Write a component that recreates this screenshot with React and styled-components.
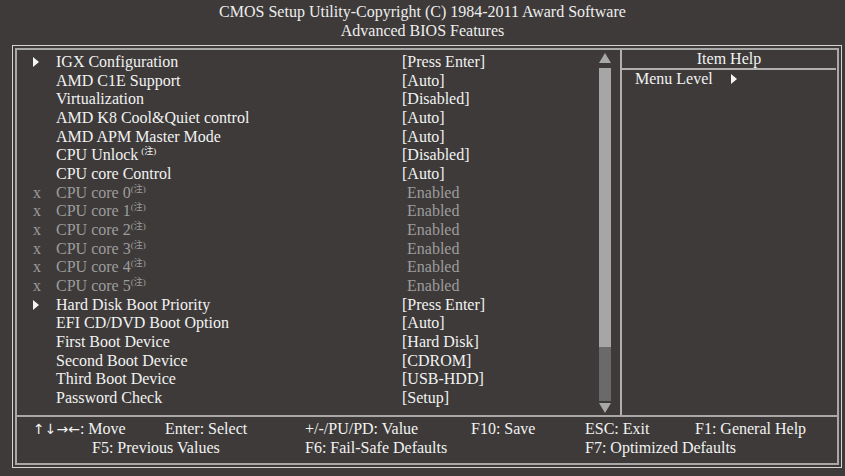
import React from "react";
import styled, { createGlobalStyle } from "styled-components";

const Global = createGlobalStyle`
  html, body { margin: 0; padding: 0; background: #3d3a39; }
  body { font-family: "Liberation Serif", "Times New Roman", serif; }
`;

const Page = styled.div`
  width: 845px;
  height: 476px;
  background: #3d3a39;
  color: #f2f2f2;
  font-size: 16px;
  overflow: hidden;
`;

const Title = styled.div`
  padding-top: 2px;
  margin-bottom: 5px;
  text-align: center;
  line-height: 19px;
  color: #eeeeee;
`;

const OuterFrame = styled.div`
  margin-left: 12px;
  width: 830px;
  box-sizing: border-box;
  border: 1px solid #d4d4d4;
  padding: 2px;
`;

const InnerFrame = styled.div`
  border: 2px solid #a8a8a8;
`;

const Main = styled.div`
  display: flex;
  height: 365px;
  border-bottom: 2px solid #a8a8a8;
`;

const ItemList = styled.div`
  width: 582px;
  padding-top: 3px;
  display: grid;
  grid-template-columns: 16px 23px 346px 1fr;
  grid-auto-rows: 18.67px;
  align-content: start;
`;

const Row = styled.div`
  display: contents;
  color: ${(p) => (p.$disabled ? "#9d9d9d" : "#f2f2f2")};
`;

const Marker = styled.div`
  grid-column: 2;
  display: flex;
  align-items: center;
  line-height: 18.67px;
  font-size: 16px;
`;

const Label = styled.div`
  grid-column: 3;
  line-height: 18.67px;
  white-space: nowrap;
`;

const Value = styled.div`
  grid-column: 4;
  line-height: 18.67px;
  white-space: nowrap;
  padding-left: ${(p) => (p.$disabled ? "5px" : "0")};
`;

const Note = styled.sup`
  font-size: 9px;
  line-height: 0;
  vertical-align: 6px;
  margin-left: ${(p) => (p.$spaced ? "3px" : "0")};
  font-family: "Liberation Serif", "Noto Sans CJK JP", serif;
`;

const ScrollCol = styled.div`
  width: 12px;
  padding-top: 3px;
  display: flex;
  flex-direction: column;
  align-items: center;
`;

const Arrow = styled.svg`
  display: block;
  width: 12px;
  height: 10px;
  flex: none;
`;

const Track = styled.div`
  margin-top: 5px;
  width: 12px;
  height: 333px;
  background: #6a6a6a;
  display: flex;
  flex-direction: column;
  margin-bottom: 2px;
`;

const Thumb = styled.div`
  height: 279px;
  background: #a6a6a6;
`;

const Divider = styled.div`
  width: 2px;
  margin-left: 9px;
  background: #b0b0b0;
`;

const HelpPane = styled.div`
  flex: 1;
  display: flex;
  flex-direction: column;
`;

const HelpHeader = styled.div`
  line-height: 18px;
  text-align: center;
  border-bottom: 2px solid #b0b0b0;
  margin-right: 1px;
`;

const HelpLine = styled.div`
  display: flex;
  align-items: center;
  line-height: 17px;
  padding-left: 13px;
  gap: 18px;
`;

const Footer = styled.div`
  display: grid;
  grid-template-columns: 16px 59px 73px 140px 166px 114px 110px 1fr;
  grid-auto-rows: 19px;
  padding-top: 2px;
  padding-bottom: 6px;
  line-height: 19px;
  white-space: nowrap;
`;

const Key = styled.div`
  grid-column: ${(p) => p.$col} / span ${(p) => p.$span || 1};
  grid-row: ${(p) => p.$row};
`;

const Arrows = styled.span`
  font-family: "DejaVu Sans", sans-serif;
  font-size: 14px;
`;

const Tri = () => (
  <svg width="6" height="10" viewBox="0 0 6 10">
    <polygon points="0,0 6,5 0,10" fill="#f4f4f4" />
  </svg>
);

const items = [
  { label: "IGX Configuration", value: "[Press Enter]", sub: true },
  { label: "AMD C1E Support", value: "[Auto]" },
  { label: "Virtualization", value: "[Disabled]" },
  { label: "AMD K8 Cool&Quiet control", value: "[Auto]" },
  { label: "AMD APM Master Mode", value: "[Auto]" },
  { label: "CPU Unlock", value: "[Disabled]", note: "spaced" },
  { label: "CPU core Control", value: "[Auto]" },
  ...[0, 1, 2, 3, 4, 5].map((n) => ({
    label: `CPU core ${n}`,
    value: "Enabled",
    note: "tight",
    disabled: true,
  })),
  { label: "Hard Disk Boot Priority", value: "[Press Enter]", sub: true },
  { label: "EFI CD/DVD Boot Option", value: "[Auto]" },
  { label: "First Boot Device", value: "[Hard Disk]" },
  { label: "Second Boot Device", value: "[CDROM]" },
  { label: "Third Boot Device", value: "[USB-HDD]" },
  { label: "Password Check", value: "[Setup]" },
];

export default function App() {
  return (
    <Page>
      <Global />
      <Title>
        <div>CMOS Setup Utility-Copyright (C) 1984-2011 Award Software</div>
        <div>Advanced BIOS Features</div>
      </Title>
      <OuterFrame>
        <InnerFrame>
          <Main>
            <ItemList>
              {items.map((it) => (
                <Row key={it.label} $disabled={it.disabled}>
                  <Marker>{it.sub ? <Tri /> : it.disabled ? "x" : null}</Marker>
                  <Label>
                    {it.label}
                    {it.note && <Note $spaced={it.note === "spaced"}>(注)</Note>}
                  </Label>
                  <Value $disabled={it.disabled}>{it.value}</Value>
                </Row>
              ))}
            </ItemList>
            <ScrollCol>
              <Arrow viewBox="0 0 12 10">
                <polygon points="6,0 12,10 0,10" fill="#a8a8a8" />
              </Arrow>
              <Track>
                <Thumb />
              </Track>
              <Arrow viewBox="0 0 12 10">
                <polygon points="0,0 12,0 6,10" fill="#a8a8a8" />
              </Arrow>
            </ScrollCol>
            <Divider />
            <HelpPane>
              <HelpHeader>Item Help</HelpHeader>
              <HelpLine>
                <span>Menu Level</span>
                <Tri />
              </HelpLine>
            </HelpPane>
          </Main>
          <Footer>
            <Key $row={1} $col={2} $span={2}><Arrows>↑↓→←</Arrows>: Move</Key>
            <Key $row={1} $col={4}>Enter: Select</Key>
            <Key $row={1} $col={5}>+/-/PU/PD: Value</Key>
            <Key $row={1} $col={6}>F10: Save</Key>
            <Key $row={1} $col={7}>ESC: Exit</Key>
            <Key $row={1} $col={8}>F1: General Help</Key>
            <Key $row={2} $col={3}>F5: Previous Values</Key>
            <Key $row={2} $col={5}>F6: Fail-Safe Defaults</Key>
            <Key $row={2} $col={7}>F7: Optimized Defaults</Key>
          </Footer>
        </InnerFrame>
      </OuterFrame>
    </Page>
  );
}
